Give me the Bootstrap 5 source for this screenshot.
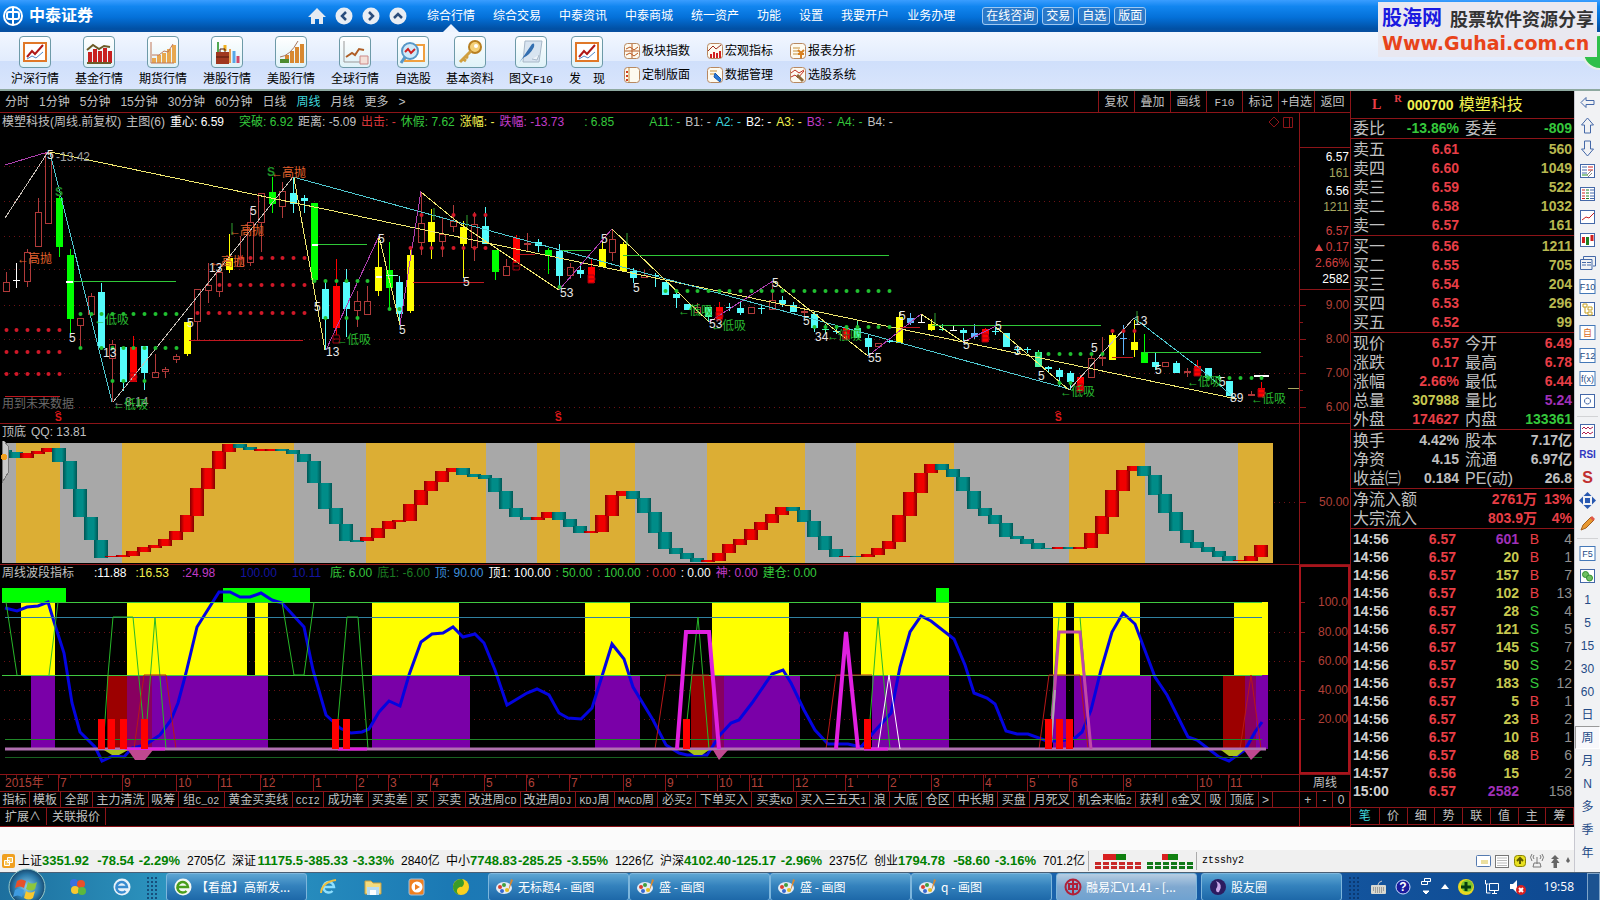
<!DOCTYPE html>
<html lang="zh-CN">
<head>
<meta charset="utf-8">
<meta name="viewport" content="width=device-width, initial-scale=1">
<title>中泰证券 - 模塑科技</title>
<link href="https://cdn.jsdelivr.net/npm/bootstrap@5.3.0/dist/css/bootstrap.min.css" rel="stylesheet">
<style>
body{font:12px/16px "Liberation Sans","Noto Sans CJK SC",sans-serif;background:#f0f0f0;color:#000;overflow-x:hidden}
button{font:inherit;color:inherit;background:none;border:0;padding:0;line-height:inherit}
a{color:inherit;text-decoration:none}
svg{display:block;flex:none}
.nowrap{white-space:nowrap}
.titlebar{height:32px;background:linear-gradient(#3a9dff 0,#1186f0 20%,#0470d8 55%,#0150a4 90%,#0a50a0);color:#fff;position:relative}
.brand{width:308px;font-size:16px;font-weight:700;gap:6px;padding-left:3px}
.brand span{line-height:20px}
.menus{gap:18px;margin-left:20px}
.menus a.on{position:relative}
.menus a.on::after{content:"";position:absolute;left:16px;top:16px;border:8px solid transparent;border-top:0;border-bottom-color:#eef4fe}
.pills{margin-left:27px}
.pill{border:1px solid #9fc9f2;border-radius:3px;background:#2c79c8;height:18px;line-height:16px;padding:0 3px}
.toolbar{height:59px;background:linear-gradient(#f2f7ff,#e2ecfd 50%,#cfdffb 51%,#d9e5fc);border-bottom:2px solid #8ea9a0;padding-left:3px}
.tool{width:64px;height:57px;display:flex;flex-direction:column;align-items:center;padding-top:4px;gap:3px}
.tool.w52{width:52px}.tool.w62{width:62px}.tool.w60{width:60px}
.tool svg{border:1px solid #6d9aa8;border-radius:4px;background:linear-gradient(#fff,#dff2f8)}
.minis{display:grid;grid-template-columns:repeat(3,83px);grid-auto-rows:24px;margin:7px 0 0 11px;align-items:center}
.minis button{display:flex;gap:2px;align-items:center}
.ball{position:absolute;right:-18px;top:34px;width:36px;height:36px;border-radius:50%;background:#2fbf4a;border:2px solid #e8efe8}
.mark-box{position:absolute;right:3px;top:2px;width:219px;height:55px;background:#e9e8f0;padding:4px 3px 0 4px;z-index:2}
.mark-box b{font-size:20px;line-height:24px;color:#1a1ae0}
.mark-box i{font:normal 700 18px/24px "Noto Sans CJK SC",sans-serif;color:#333}
.mark-box strong{display:block;font:700 19px/26px "DejaVu Sans",sans-serif;color:#e8431a}
.dark{background:#000;color:#c0c0c0}
.ln{border-color:#8c1418!important}
.periods{height:22px;border-bottom:1px solid #8c1418}
.periods .left{gap:10px;padding-left:5px}
.periods .fn{width:36px;height:21px;border-left:1px solid #8c1418;text-align:center}
.cy{color:#3fd6dc}.gn{color:#35c83c}.wh{color:#fff}.rd{color:#d8363a}.ye{color:#f0f050}.mg{color:#c03cc8}.dg{color:#1c7c22}.bl{color:#1414a0}.lb{color:#3e8fdc}
.panel{display:grid;grid-template-columns:minmax(0,1fr) 51px;border-bottom:1px solid #8c1418}
.plot{min-width:0;overflow:hidden}
.axis{border-left:1px solid #8c1418}
.axis.hot{border:2px solid #a8141c}
.hd{display:flex;gap:5px;white-space:nowrap;padding-left:2px;line-height:14px}
.hd .g1{margin-left:10px}.hd .g2{margin-left:15px}.hd .g3{margin-left:30px}
.hmain{height:16px;position:relative;padding-top:2px}.hsub{height:17px;padding-top:1px}
.corner{position:absolute;right:4px;top:2px}
svg.fill{width:100%}
svg text{font-family:"Liberation Sans","Noto Sans CJK SC",sans-serif;font-size:12px}
.cr{shape-rendering:crispEdges}
.tabs{display:grid;height:17px;border-bottom:1px solid #8c1418}
.tabs button{border-right:1px solid #8c1418;overflow:hidden;white-space:nowrap;line-height:15px;height:16px;text-align:center}
.tabs .lt{font:10px/12px "Liberation Mono",monospace}
.fn .lt,.tool .lt{font:11px/12px "Liberation Mono",monospace}
.tabs-ind{grid-template-columns:30fr 31fr 32fr 56fr 30fr 46fr 68fr 31fr 45fr 43fr 22fr 32fr 55fr 55fr 39fr 44fr 38fr 56fr 45fr 73fr 20fr 32fr 32fr 44fr 32fr 44fr 62fr 32fr 38fr 20fr 33fr 14fr 26fr}
.tabs-zoom{grid-template-columns:repeat(3,1fr);border-left:1px solid #8c1418}
.tabs2{height:18px;display:flex}
.tabs2 button{border-right:1px solid #8c1418;padding:0 5px;height:17px}
.split{display:grid;grid-template-columns:minmax(0,1fr) 51px}
.quote{width:224px;flex:none;border-left:1px solid #8c1418;font-size:14px;color:#c0c0c0}
.quote .ttl{height:28px;font-weight:700;border-bottom:1px solid #8c1418;gap:5px;padding-left:21px}
.quote table{width:100%;table-layout:fixed;border-bottom:1px solid #8c1418;border-collapse:separate;border-spacing:0;margin:0}
.quote td,.quote th{padding:0;height:19px;line-height:19px;text-align:right;font-weight:700;white-space:nowrap}
.quote th{font-weight:400;font-size:16px;text-align:left}
.pad{border-top:1px solid #000}
.quote td:last-child{padding-right:2px}
.quote th{padding-left:2px}
.quote th+td+th{padding-left:6px}
.quote .q5 td{color:#b8b850}.quote .q5 td:nth-child(2){color:#e83e46}
.quote .r{color:#e83e46}.quote .g{color:#35c83c}.quote .y{color:#c8c850}.quote .m{color:#a030b8}
.quote .ticks{border:0;margin:1px 0 7px}
.quote .ticks td,.quote .ticks th{height:18px;line-height:18px}
.quote .ticks th{font-size:14px;font-weight:700;color:#d0d0d0}
.quote .ticks td:nth-child(4){font-weight:400;padding-right:5px}
.quote .ticks td:last-child{font-weight:400;color:#909090}
.serif{font-family:"Liberation Serif",serif}
.qtabs{display:grid;grid-template-columns:repeat(8,1fr);height:18px;border:1px solid #8c1418;border-left:0;font-size:12px}
.qtabs button+button{border-left:1px solid #8c1418}
.rail{width:26px;flex:none;background:#f1f2f4;border-left:1px solid #c8c8d0;color:#244a86}
.rail button{height:23px;width:25px;display:flex;align-items:center;justify-content:center}
.rail hr{margin:3px 2px;border-color:#777;height:1px}
.rail button.on{background:#f8f8fb;border:1px solid #999;border-right-color:#fff;border-bottom-color:#fff}
.blank{background:#fbfbfb;flex:1 0 23px}
.status{height:22px;background:#f0f0f0;padding-left:2px}
.idx{display:grid;grid-template-columns:24px 47px 45px 46px 52px}
.idx b{color:#008000;font-size:13px;text-align:right}
.idx span:last-child{padding-left:7px}
.user{border-left:1px solid #aaa;padding-left:5px;font-family:"Liberation Mono",monospace;font-size:10px;line-height:18px;flex:1}
.meter{border-left:1px solid #aaa;padding-left:6px;width:108px}
.taskbar{height:29px;background:linear-gradient(90deg,#1d6f9e,#2f9ac4 12%,#1b79b4 28%,#2777bd 45%,#175fa9 70%,#0e4890);border-top:1px solid #4a5f74;color:#fff;font-family:"Noto Sans CJK SC",sans-serif;position:relative}
.orb{width:56px;height:28px;overflow:visible}
.quick{width:44px;display:flex;justify-content:center}
.quicks{width:181px}
.task{flex:0 1 141px;min-width:0;height:28px;border:1px solid #7db6dc;border-radius:3px;background:linear-gradient(#5ea6d3,#3482bd 45%,#1d68a8);display:flex;align-items:center;gap:4px;padding-left:7px;white-space:nowrap;overflow:hidden}
.task.on{background:linear-gradient(#b6cde2,#7fa8d0 50%,#6fa2d0)}
.tray{gap:9px}
.clock{font-family:"Open Sans",sans-serif}
.peek{width:13px;height:28px;border:1px solid #7fa4c8;background:#1c5391}
</style>
</head>
<body class="min-vh-100 d-flex flex-column">

<header class="titlebar d-flex align-items-center nowrap">
  <div class="brand d-flex align-items-center">
    <svg width="20" height="20" viewBox="0 0 20 20" fill="none" stroke="#fff" stroke-width="2"><circle cx="10" cy="10" r="9"/><path d="M10 1v18M9 6H6a2 2 0 0 0-2 2v3a2 2 0 0 0 2 2h3M11 6h3a2 2 0 0 1 2 2v3a2 2 0 0 1-2 2h-3"/></svg>
    <span>中泰证券</span>
  </div>
  <nav class="d-flex align-items-center" aria-label="导航">
    <div class="d-flex" style="gap:9px" id="navicons"></div>
    <div class="menus d-flex"><a href="#" class="on">综合行情</a><a href="#">综合交易</a><a href="#">中泰资讯</a><a href="#">中泰商城</a><a href="#">统一资产</a><a href="#">功能</a><a href="#">设置</a><a href="#">我要开户</a><a href="#">业务办理</a></div>
    <div class="pills d-flex gap-1"><button class="pill">在线咨询</button><button class="pill">交易</button><button class="pill">自选</button><button class="pill">版面</button></div>
  </nav>
  <div class="ball"></div>
  <div class="mark-box"><div class="d-flex gap-2"><b>股海网</b><i>股票软件资源分享</i></div><strong>Www.Guhai.com.cn</strong></div>
</header>

<div class="toolbar d-flex nowrap">
  <div class="d-flex" id="tools"></div>
  <div class="minis" id="minis"></div>
</div>

<div class="d-flex flex-grow-1">
 <div class="flex-grow-1 d-flex flex-column" style="min-width:0">
  <div class="d-flex dark">
   <main class="flex-grow-1" style="min-width:0">
    <div class="periods d-flex justify-content-between nowrap">
      <div class="left d-flex align-items-center"><button>分时</button><button>1分钟</button><button>5分钟</button><button>15分钟</button><button>30分钟</button><button>60分钟</button><button>日线</button><button class="cy">周线</button><button>月线</button><button>更多</button><button>&gt;</button></div>
      <div class="d-flex"><button class="fn">复权</button><button class="fn">叠加</button><button class="fn">画线</button><button class="fn"><span class="lt">F10</span></button><button class="fn">标记</button><button class="fn">+自选</button><button class="fn">返回</button></div>
    </div>

    <section class="panel">
      <div class="plot">
        <div class="hd hmain"><span>模塑科技(周线.前复权)</span><span>主图(6)</span><span class="wh">重心: 6.59</span><span class="gn g1">突破: 6.92</span><span>距离: -5.09</span><span class="rd">出击: -</span><span class="gn">休假: 7.62</span><span class="ye">涨幅: -</span><span class="mg">跌幅: -13.73</span><span class="gn g2">: 6.85</span><span class="gn g3">A11: -</span><span>B1: -</span><span class="cy">A2: -</span><span class="wh">B2: -</span><span class="ye">A3: -</span><span class="mg">B3: -</span><span class="gn">A4: -</span><span>B4: -</span>
          <svg class="corner" width="28" height="14" fill="none" stroke="#8c1418"><path d="M7 2l5 5-5 5-5-5zM16.500 2.500h9v10h-9zM22.500 2.500v10"/></svg></div>
        <svg class="fill" id="kline" height="294" role="img" aria-label="周K线"></svg>
      </div>
      <div class="axis"><svg id="kaxis" width="50" height="310"></svg></div>
    </section>

    <section class="panel">
      <div class="plot">
        <div class="hd hsub"><span>顶底</span><span>QQ: 13.81</span></div>
        <svg class="fill" id="sub1" height="123" role="img" aria-label="顶底"></svg>
      </div>
      <div class="axis"><svg id="axis1" width="50" height="140"></svg></div>
    </section>

    <section class="panel">
      <div class="plot">
        <div class="hd hsub"><span>周线波段指标</span><span class="wh g2">:11.88</span><span class="ye ms-1">:16.53</span><span class="mg ms-2">:24.98</span><span class="bl ms-3 ps-1">100.00</span><span class="bl g1">10.11</span><span class="gn ms-1">底: 6.00</span><span class="dg">底1: -6.00</span><span class="lb">顶: 90.00</span><span class="wh">顶1: 100.00</span><span class="gn">: 50.00</span><span class="gn">: 100.00</span><span class="rd">: 0.00</span><span class="wh">: 0.00</span><span class="mg">神: 0.00</span><span class="gn">建仓: 0.00</span></div>
        <svg class="fill" id="sub2" height="192" role="img" aria-label="周线波段指标"></svg>
      </div>
      <div class="axis hot"><svg id="axis2" width="47" height="205"></svg></div>
    </section>

    <div class="split">
      <div class="plot"><svg class="fill" id="dates" height="16"></svg></div>
      <div class="axis text-center">周线</div>
    </div>
    <div class="split">
      <div class="tabs tabs-ind ln" id="indtabs" style="border-top:1px solid"></div>
      <div class="tabs tabs-zoom ln" style="border-top:1px solid"><button>+</button><button>-</button><button>0</button></div>
    </div>
    <div class="split border-bottom ln">
      <div class="tabs2"><button>扩展∧</button><button>关联报价</button></div><div class="axis"></div>
    </div>
   </main>

   <aside class="quote">
    <div class="ttl d-flex align-items-center"><span class="r serif">L</span><sup class="r serif ms-2">R</sup><span class="ye">000700</span><span class="ye fs-6 fw-normal">模塑科技</span></div>
    <div id="quote"></div>
    <div class="qtabs"><button class="cy">笔</button><button>价</button><button>细</button><button>势</button><button>联</button><button>值</button><button>主</button><button>筹</button></div>
   </aside>
  </div>
  <div class="blank"></div>
  <footer class="status d-flex align-items-center nowrap">
    <svg width="16" height="14"><rect x="0" y="0" width="13" height="14" rx="2" fill="#f0a020"/><path d="M5.500 3.500h5v5h-5zM2.500 6.500h5v5h-5z" fill="#f8c860" stroke="#fff"/></svg>
    <div class="d-flex" id="idx"></div>
    <div class="meter"><svg width="100" height="20" id="meter" class="cr"></svg></div>
    <span class="user">ztsshy2</span>
    <svg width="98" height="20" fill="none">
      <rect x=".5" y="4.500" width="14" height="11" rx="1" fill="#fff" stroke="#557ab0"/><path d="M5 10h7M5 12h7" stroke="#d8c040"/>
      <rect x="19.500" y="4.500" width="13" height="12" fill="#fff" stroke="#777"/><path d="M21 7h10M21 9.500h10M21 12h10M21 14.500h10" stroke="#bbb"/>
      <rect x="38.500" y="4.500" width="11" height="11" rx="3" fill="#e8e020" stroke="#8a8400"/><path d="M44 13V7m-3 3l3-3 3 3" stroke="#5c5800" stroke-width="2"/>
      <path d="M61 6v7M57 16l1-4h6l1 4zM58 4q-2 2 0 4M64 4q2 2 0 4M56 3q-3 3 0 7M66 3q3 3 0 7" stroke="#777"/>
      <path d="M79 4l4 4h-2.500l3 4h-2.500v5h-3.500v-5h-2.500l3-4H75zM92 6l2 4-2 2-2-2zM92 12v3" fill="#666"/>
    </svg>
  </footer>
 </div>
 <nav class="rail" id="rail" aria-label="工具"></nav>
</div>

<div class="taskbar d-flex align-items-center">
  <button class="orb" aria-label="开始"><svg width="56" height="30" viewBox="0 0 56 30" overflow="visible"><defs><radialGradient id="orb"><stop offset="0" stop-color="#8fd0f0"/><stop offset=".7" stop-color="#2a78a8"/><stop offset="1" stop-color="#184a70"/></radialGradient></defs><circle cx="27" cy="14" r="18" fill="url(#orb)" stroke="#9cc"/><path d="M17 8q4-3 9 0l-2 7q-4-3-9 0z" fill="#e8502a"/><path d="M28 9q4 3 9 0l-2 7q-4 3-9 0z" fill="#8cc63e"/><path d="M15 17q4-3 9 0l-2 7q-4-3-9 0z" fill="#3f9be0"/><path d="M26 18q4 3 9 0l-2 7q-4 3-9 0z" fill="#f8c830"/></svg></button>
  <div class="quick"><svg width="18" height="18"><circle cx="5" cy="5" r="4" fill="#3a70e0"/><circle cx="12" cy="6" r="4" fill="#e8502a"/><circle cx="6" cy="12" r="4" fill="#f8c830"/><circle cx="13" cy="13" r="4" fill="#5cb83e"/></svg></div>
  <div class="quick"><svg width="18" height="18"><circle cx="9" cy="9" r="8.500" fill="#e8f2fa"/><use href="#ie" color="#3a8cd0"/></svg></div>
  <svg width="22" height="24"><path d="M4 2v22M8 2v22M12 2v22" stroke="#164e7c" stroke-width="2" stroke-dasharray="2 2"/></svg>
  <button class="task"><svg width="18" height="18"><circle cx="9" cy="9" r="8.500" fill="#f4f8f4"/><use href="#ie" color="#4a9e1c"/></svg>【看盘】高新发...</button>
  <div class="quicks d-flex"><div class="quick"><svg width="18" height="18"><use href="#ie" color="#8fe0ff"/><path d="M1 15Q2 4 16 2" stroke="#f0c040" fill="none" stroke-width="2"/></svg></div>
  <div class="quick"><svg width="18" height="18"><path d="M1 3h6l2 2h8v11H1z" fill="#f4dc80" stroke="#c8a040"/><path d="M3 9h12v8H3z" fill="#b8dcf4"/><path d="M6 12h6v5H6z" fill="#fff"/></svg></div>
  <div class="quick"><svg width="18" height="18"><rect x="1" y="1" width="15" height="16" rx="2" fill="#f08020" stroke="#9cc0e0"/><circle cx="9" cy="9" r="5.500" fill="#fff"/><path d="M7 6l5 3-5 3z" fill="#f08020"/></svg></div>
  <div class="quick"><svg width="18" height="18"><circle cx="9" cy="9" r="8" fill="#f8d020"/><path d="M10 1a5 5 0 0 1 0 8 4 4 0 0 0-2 8A8 8 0 0 1 10 1z" fill="#3c9c28"/></svg></div></div>
  <button class="task"><svg width="18" height="18"><use href="#paint"/></svg>无标题4 - 画图</button>
  <button class="task"><svg width="18" height="18"><use href="#paint"/></svg>盛 - 画图</button>
  <button class="task"><svg width="18" height="18"><use href="#paint"/></svg>盛 - 画图</button>
  <button class="task"><svg width="18" height="18"><use href="#paint"/></svg>q - 画图</button>
  <button class="task on ms-1"><svg width="18" height="18" fill="none" stroke="#b02038" stroke-width="2"><circle cx="9" cy="9" r="7.500"/><path d="M9 2v14M5 6h8v5H5z"/></svg>融易汇V1.41 - [...</button>
  <button class="task ms-1"><svg width="18" height="18"><circle cx="9" cy="9" r="8" fill="#2c1c60"/><path d="M7 3q8 3 3 11-3 1-3-3 3-4 0-8z" fill="#c8a8e8"/></svg>股友圈</button>
  <div class="tray d-flex align-items-center ms-auto">
    <svg width="16" height="24"><path d="M4 2v22M8 2v22M12 2v22" stroke="#0b3a74" stroke-width="2" stroke-dasharray="2 2"/></svg>
    <svg width="15" height="14"><rect y="5" width="15" height="9" rx="1" fill="#d8d8d0"/><path d="M2 8h11M2 10h11M4 12h7" stroke="#666" stroke-dasharray="1 1"/><path d="M7 5q0-3 4-4" stroke="#ccc" fill="none"/></svg>
    <svg width="16" height="16"><circle cx="8" cy="8" r="7" fill="#1a1a9c" stroke="#cdf"/><text x="8" y="12" text-anchor="middle" fill="#fff" font-weight="700">?</text></svg>
    <svg width="12" height="20" fill="none" stroke="#fff"><path d="M4.500 1.500h6v3h-6zM1.500 4.500h6v3h-6z"/><path d="M3 14h6l-3 3z" fill="#fff"/></svg>
    <svg width="8" height="8"><path d="M0 6h8L4 1z" fill="#fff"/></svg>
    <svg width="17" height="17"><circle cx="8" cy="8" r="8" fill="#e8d820"/><circle cx="9" cy="7" r="6" fill="#7cc42c"/><path d="M8 3v9M3 8h10" stroke="#063c10" stroke-width="3"/></svg>
    <svg width="16" height="16" fill="none" stroke="#fff"><path d="M5.500 4.500h9v7h-9zM8 14.500h5M10.500 12v2M1.500 1v4h3M2.500 5v9h4"/></svg>
    <svg width="17" height="16"><path d="M1 5h3l4-4v13l-4-4H1z" fill="#fff"/><circle cx="12" cy="11" r="5" fill="#d82020"/><path d="M10 9l4 4M14 9l-4 4" stroke="#fff" stroke-width="2"/></svg>
    <span class="clock ms-2 me-1">19:58</span><button class="peek" aria-label="显示桌面"></button>
  </div>
</div>

<svg width="0" height="0" class="position-absolute"><defs>
  <linearGradient id="gr"><stop offset="0" stop-color="#800000"/><stop offset=".3" stop-color="#f00000"/><stop offset=".7" stop-color="#f00000"/><stop offset="1" stop-color="#800000"/></linearGradient>
  <linearGradient id="gt"><stop offset="0" stop-color="#005654"/><stop offset=".3" stop-color="#008c88"/><stop offset=".7" stop-color="#008c88"/><stop offset="1" stop-color="#005654"/></linearGradient>
  <g id="ie" fill="none" stroke="currentColor" stroke-width="2.500"><path d="M4 9h10a5.300 5.300 0 1 0-1.500 4"/></g>
  <g id="paint"><ellipse cx="8" cy="10" rx="8" ry="6" fill="#e4ecf4"/><circle cx="4" cy="9" r="2" fill="#d84030"/><circle cx="8" cy="7" r="2" fill="#40a040"/><circle cx="6" cy="13" r="2" fill="#3868d0"/><circle cx="11" cy="12" r="2" fill="#e8c020"/><path d="M12 14L15 1l2 1z" fill="#d88830"/></g>
</defs></svg>

<script src="https://cdn.jsdelivr.net/npm/bootstrap@5.3.0/dist/js/bootstrap.bundle.min.js"></script>
<script>
const $ = id => document.getElementById(id);
const PITCH = 10.64, X0 = 5.7, cx = i => Math.round(X0 + PITCH * i);
const seg = (x1, y1, x2, y2, c, w = 1) => `<path d="M${x1} ${y1}L${x2} ${y2}" stroke="${c}" stroke-width="${w}" fill="none"/>`;
const box = (x, y, w, h, c) => `<rect x="${x}" y="${y}" width="${w}" height="${h}" fill="${c}"/>`;
const txt = (x, y, s, c, e = '') => `<text x="${x}" y="${y + 4}" fill="${c}" ${e}>${s}</text>`;
const poly = (p, c, w = 1) => `<polyline points="${p}" fill="none" stroke="${c}" stroke-width="${w}"/>`;
const grid = (y, to = 1299) => `<path d="M4 ${y}.5H${to}" stroke="#6c1216" stroke-dasharray="1 4"/>`;

/* title bar icons */
$('navicons').innerHTML = ['<path d="M9 1L0 10h3v7h4v-5h4v5h4v-7h3z" fill="#e4eaf2"/>']
  .concat(['M11 5L7 9l4 4', 'M7 5l4 4-4 4', 'M5 11l4-4 4 4'].map(d => `<circle cx="9" cy="9" r="8.500" fill="#e8edf4"/><path d="${d}" fill="none" stroke="#2a4c7c" stroke-width="2.500"/>`))
  .map(s => `<button><svg width="18" height="18">${s}</svg></button>`).join('');

/* large tools */
const bars = (c, hs) => hs.map((h, k) => `<rect x="${4 + k * 5}" y="${26 - h}" width="4" height="${h}" fill="${c}"/>`).join('');
const I = {
  frame: '<rect x="4" y="6" width="22" height="18" fill="#fff" stroke="#e07828" stroke-width="2"/><path d="M7 20l5-6 3 3 8-9" fill="none" stroke="#b01818" stroke-width="2"/><path d="M7 22l5-3 4 2 7-6" fill="none" stroke="#5088c8"/>',
  fund: bars('#c82020', [11, 14, 12, 15, 12]) + '<path d="M3 26h24M3 13l6-5 6 4 5-3 6 1" stroke="#6c5c28" fill="none" stroke-width="2"/>',
  fut: bars('#e8a850', [5, 8, 10, 14, 18]) + '<path d="M3 5v21h23M4 18h7l5-4 4 1 5-8" stroke="#c07858" fill="none"/>',
  hk: '<path d="M6 5v10" stroke="#50a850" stroke-width="2"/><path d="M13 8v6" stroke="#f0b020" stroke-width="3"/><path d="M18 12v14" stroke="#e8a050" stroke-width="2"/><path d="M22 14v12" stroke="#58a8e8" stroke-width="3"/><path d="M26 19v7" stroke="#d04868" stroke-width="3"/><path d="M4 15h13v12H4z" fill="#a03820"/><path d="M8 15v-3h5v3M4 20h13" stroke="#50180c" fill="none"/>',
  us: bars('#d88830', [4, 8, 12, 16, 19]) + '<path d="M4 22h9v4H4z" fill="#4c8c30"/><path d="M4 20q10-1 18-16" stroke="#a87860" fill="none"/>',
  glob: '<path d="M4 4v21h22" stroke="#999" fill="none"/><path d="M6 20l6-4 3 2 4-6 5 1" stroke="#b06028" fill="none" stroke-width="2"/><path d="M20 19h8v8h-8z" fill="#f4e0d8" stroke="#c88"/>',
  own: '<path d="M7 8h19v16H7z" fill="#fff" stroke="#f0a040" stroke-width="2"/><circle cx="12" cy="14" r="8" fill="#cfeafa" stroke="#5898c8" stroke-width="2"/><path d="M7 15l3-3 3 4 4-4" stroke="#d02020" fill="none" stroke-width="2"/><path d="M7 20l-4 6" stroke="#5898c8" stroke-width="3"/>',
  key: '<circle cx="20" cy="10" r="6" fill="#f4d078" stroke="#b88020" stroke-width="2"/><circle cx="21" cy="9" r="2" fill="#fff"/><path d="M16 14L5 25m3-3l3 2m-1-5l3 2" stroke="#d0a040" stroke-width="3" fill="none"/>',
  pen: '<path d="M9 4h17l-3 21H7z" fill="#d8e4f0" stroke="#a8b8c8"/><path d="M3 26L16 7q3-2 2 3-4 8-11 11z" fill="#3470b0"/><path d="M16 22l5 1 2-5" fill="#eef4fa" stroke="#a8b8c8"/>'
};
$('tools').innerHTML = [['沪深行情','frame',''],['基金行情','fund',''],['期货行情','fut',''],['港股行情','hk',''],['美股行情','us',''],['全球行情','glob',''],['自选股','own','w52'],['基本资料','key','w62'],['图文<span class="lt">F10</span>','pen','w60'],['发&emsp;现','frame','w52']]
  .map(([n, k, w]) => `<button class="tool ${w}"><svg width="32" height="32" viewBox="0 0 30 30">${I[k]}</svg><span>${n}</span></button>`).join('');
const M = ['<path d="M8 1v14M1 8h14M2 6l4-2 4 3 4-3M2 12l4-2 4 3 4-3" stroke="#b85820"/>','<path d="M4 15v-4M7 15V9M10 15v-5M13 15V8" stroke="#d02020" stroke-width="2"/><path d="M1 8l5-5 3 3 5-4" stroke="#a03020"/>','<path d="M3 5h7M3 8h5M3 11h5" stroke="#c89038"/><path d="M8 7l3 3 3-3M11 10v5M8 11h6" stroke="#d88020" stroke-width="2"/>',
 '<path d="M5 1v14" stroke="#c89038"/><path d="M3 4v2M3 8v2M3 12v2" stroke="#d04020" stroke-width="2"/>','<path d="M3 4h7M3 7h4" stroke="#c89038"/><path d="M8 6l6 6-1 3-6-5z" fill="#2a78d8" stroke="#1858a8"/>','<path d="M1 6l4-3 4 3 5-3M1 10l4-2 3 3 6-7" stroke="#c03020"/><path d="M7 8l6 6" stroke="#8c6838" stroke-width="3"/>'];
$('minis').innerHTML = ['板块指数','宏观指标','报表分析','定制版面','数据管理','选股系统'].map((n, k) => `<button><svg width="16" height="16" fill="none"><rect x=".5" y=".5" width="15" height="15" rx="3" fill="#fdfaf0" stroke="#b88860"/>${M[k]}</svg>${n}</button>`).join('');

/* weekly candles: index, kind, high, top, bottom, low */
const K = `0 h 272 282 292 292|1 w 263 280 281 288|2 h 249 252 282 287|3 h 198 212 247 247|4 h 152 152 224 224|5 g 195 198 247 257|6 g 249 255 319 335|7 h 318 318 326 348|8 h 293 296 315 315|9 c 283 292 348 348|10 h 340 344 359 402|11 c 347 347 382 391|12 r 336 347 382 382|13 c 346 346 373 390|14 h 354 372 378 378|15 h 367 369 372 378|16 h 354 356 360 363|17 y 322 322 354 356|18 h 289 289 322 340|19 h 263 285 291 303|20 h 267 272 292 297|21 y 234 258 270 273|22 h 236 258 267 267|23 h 208 222 263 266|24 h 193 193 223 252|25 g 177 192 204 213|26 h 182 191 207 218|27 c 178 193 204 213|28 c 195 198 201 213|29 g 203 203 280 280|30 c 282 289 319 350|31 r 259 286 328 335|32 c 269 282 309 337|33 h 291 301 311 327|34 h 286 301 315 315|35 y 237 267 291 296|36 g 242 270 288 309|37 c 276 282 314 323|38 y 247 255 311 313|39 h 192 223 243 255|40 y 209 222 242 259|41 h 217 234 242 257|42 h 205 221 227 232|43 y 221 227 244 278|44 h 212 224 248 261|45 c 207 226 244 244|46 g 250 250 272 280|47 h 259 266 276 276|48 r 235 238 263 263|49 h 233 243 245 251|50 c 239 242 246 252|51 g 248 250 256 274|52 c 244 251 276 288|53 h 263 267 276 279|54 c 263 270 274 278|55 r 258 267 283 283|56 y 242 249 267 267|57 h 229 239 253 261|58 y 242 244 271 271|59 c 268 271 278 283|60 h 270 275 278 278|61 c 273 275 276 287|62 c 282 282 295 295|63 c 292 294 298 308|64 c 304 304 310 310|65 h 303 307 313 313|66 t 307 307 317 322|67 r 302 307 319 319|68 c 303 307 308 311|69 c 302 308 313 315|70 h 307 307 314 314|71 c 305 308 309 314|72 h 283 300 310 310|73 c 296 300 304 307|74 c 302 305 312 312|75 h 309 311 313 317|76 c 312 314 328 332|77 t 324 329 330 333|78 c 327 331 332 334|79 r 328 328 339 339|80 t 321 328 338 338|81 c 335 338 347 356|82 h 343 343 347 347|83 c 339 341 342 343|84 y 312 317 343 343|85 b 313 318 323 325|86 w 314 322 323 323|87 y 319 324 330 331|88 t 324 329 330 331|89 w 326 330 331 331|90 c 328 330 333 342|91 b 324 333 337 339|92 r 328 329 342 342|93 c 327 331 332 335|94 c 333 333 347 347|95 c 347 349 350 353|96 c 347 349 350 353|97 t 350 352 367 367|98 c 366 367 369 372|99 c 368 370 377 387|100 c 371 373 382 390|101 r 375 377 391 391|102 h 353 358 378 378|103 h 337 357 359 366|104 y 333 335 360 360|105 b 325 338 339 355|106 y 320 342 350 357|107 g 334 352 363 363|108 c 353 362 367 370|109 h 362 362 367 367|110 c 361 363 373 373|111 h 368 371 373 377|112 r 360 366 376 376|113 c 368 368 378 378|114 t 375 377 378 381|115 c 381 381 396 396|117 h 391 394 395 395|118 r 382 388 397 397`.split('|').map(r => r.split(' '));
const KC = {h:'#b03a3a', c:'#54fcfc', g:'#00ff00', y:'#ffff00', r:'#ff0000', w:'#fff', t:'#48f8a8', b:'#60b8ff'};
let s = [166,201,236,269,305,339,373,407].map(y => grid(y, 1296)).join('');
for (const [i, k, hi, t, b, lo] of K) {
  const x = cx(+i), c = KC[k], h = b - t;
  s += seg(x + .5, +hi, x + .5, k === 'h' ? +t : +lo, c);
  if (k === 'h') { s += seg(x + .5, +b, x + .5, +lo, c) + `<rect x="${x - 2.5}" y="${+t + .5}" width="6" height="${Math.max(1, h - 1)}" fill="none" stroke="${c}"/>`; }
  else s += box(x - 3, t, 7, Math.max(1, h), c);
}
const YL = '#f0e870', MG = '#b040b0', WH = '#c8c0b8', CYL = '#50c8d0', GL = '#30c838', RL = '#c01820';
s += [[5,165,48,152,MG],[5,218,48,152,WH],[50,153,112,402,CYL],[113,402,293,177,WH],[50,152,1237,399,YL],[293,177,1069,389,CYL],[294,178,325,350,YL],[326,350,379,236,MG],[379,236,400,325,YL],[400,325,421,191,MG],[421,192,460,224,YL],[460,224,559,290,YL],[559,290,612,229,MG],[612,229,709,322,YL],[709,322,773,281,MG],[773,281,868,356,YL],[868,356,921,314,MG],[921,314,963,342,YL],[963,342,996,326,MG],[996,327,1069,390,YL],[1069,390,1134,318,WH],[1134,318,1198,367,CYL],[1198,367,1236,399,CYL],
 [69,281.5,176,281.5,GL],[5,396.5,60,396.5,RL],[189,340.5,303,340.5,RL],[314,244.5,367,244.5,GL],[413,282.5,484,282.5,RL],[562,250.5,591,250.5,GL],[623,255.5,889,255.5,GL],[516,254.5,535,254.5,RL],[932,325.5,1101,325.5,GL],[1144,352.5,1261,352.5,GL],[900,327.5,920,327.5,RL],[1112,357.5,1133,357.5,RL],[1254,376,1269,376,'#fff',2],[1288,388.5,1299,388.5,'#a8a860'],[66,282,73,282,'#fff',2],[376,277,382,277,'#fff',2],[386,275,398,275,'#9fc'],[312,245,318,245,'#fff',2]].map(a => seg(...a)).join('');
s = `<g class="cr">${s}</g>`;
/* signal dots: colour, y, first, last */
[['r',330,0,5],['r',352,0,5],['r',374,0,5],['r',258,22,28],['r',285,20,28],['r',313,18,28],['g',314,7,16],['g',348,7,7],['g',348,9,16],['g',381,10,11],['g',381,13,13],['g',281,29,34],['g',318,30,30],['g',318,32,33],['r',248,38,45],['r',215,39,39],['r',215,42,42],['r',215,44,45],['g',309,36,37],['g',287,52,52],['g',291,62,83],['g',327,76,83],['g',354,97,103],['g',383,99,100],['r',331,104,106],['g',378,113,118]]
 .forEach(([c, y, a, b]) => { for (let i = a; i <= b; i++) s += `<circle cx="${cx(i) + .5}" cy="${y}" r="2" fill="${c === 'r' ? '#d01828' : '#20c030'}"/>`; });
const W = '#e8e8e8', OR = '#e0622c', GT = '#28b830';
s += [[47,155,'5'],[69,338,'5'],[103,353,'13'],[250,211,'5'],[209,268,'13'],[187,323,'5'],[314,307,'5'],[326,352,'13'],[378,239,'5'],[399,330,'5'],[463,282,'5'],[560,293,'53'],[601,239,'5'],[633,288,'5'],[709,324,'53'],[772,283,'5'],[803,321,'5'],[815,337,'34'],[868,358,'55'],[899,316,'5'],[963,345,'5'],[995,326,'5'],[1014,351,'3'],[1038,376,'5'],[1091,348,'5'],[1134,321,'13'],[1155,370,'5'],[1219,382,'5'],[1230,398,'89']].map(([x, y, t]) => txt(x, y, t, W)).join('');
s += txt(56,157,'-13.42','#a0a0a0') + txt(113,402,'←8.14','#a0a0a0') + txt(2,404,'用到未来数据','#686868');
s += [[17,259],[229,231],[210,262],[271,173]].map(([x, y]) => txt(x, y, '←', OR) + txt(x + 11, y, '高抛', OR)).join('');
s += [[94,320],[113,405],[336,340],[678,311],[711,326],[827,336],[1060,392],[1187,382],[1251,399]].map(([x, y]) => txt(x, y, '←', GT) + txt(x + 11, y, '低吸', GT)).join('');
s += [[55,192],[267,172]].map(([x, y]) => txt(x, y, 'S', '#209028', 'font-weight="700"')).join('');
s += [58, 558, 1058].map(x => `<path d="M${x - 3} 413l3-2 3 2" stroke="#e01818" fill="none"/>` + txt(x - 3, 417, 'S', '#e01818', 'font-weight="700" style="font-size:10px"')).join('');
s += [[12,377],[31,339],[48,266],[55,279],[67,316],[79,335],[92,338],[101,388],[112,372],[118,393]].map(([i, y]) => `<path d="M${cx(i) - 3} ${y - 4}h6l1 4-1 4h-6zm0 4h6" fill="none" stroke="#a00010"/>`).join('');
s += [[232,230],[434,215],[467,222],[627,240],[935,320],[1137,318]].map(([x, y]) => seg(x, y - 7, x, y + 5, '#30a030')).join('');
$('kline').innerHTML = `<g transform="translate(0,-129)">${s}</g>`;

const ax = (y, t, c = '#b04038') => txt(49, y, t, c, 'text-anchor="end"');
$('kaxis').innerHTML = `<g transform="translate(0,-113)">${[147,289].map(y => seg(0, y + .5, 50, y + .5, '#8c1418')).join('')}${[305,339,373,407].map(y => seg(0, y + .5, 6, y + .5, '#8c1418')).join('')}${[322,356,390].map(y => seg(0, y + .5, 3, y + .5, '#8c1418')).join('')}${ax(157,'6.57','#fff')}${ax(173,'161','#a8a860')}${ax(191,'6.56','#fff')}${ax(207,'1211','#a8a860')}${ax(231,'6.57','#d04040')}${ax(247,'0.17','#d04040')}${ax(263,'2.66%','#d04040')}${ax(279,'2582','#fff')}${ax(305,'9.00')}${ax(339,'8.00')}${ax(373,'7.00')}${ax(407,'6.00')}<path d="M15 251h8l-4-7z" fill="#e04040"/></g>`;

/* oscillator: top and bottom of each bar, r rising / t falling */
const B = '450 452 t|452 458 t|453 458 r|451 454 r|448 452 r|448 462 t|461 489 t|489 517 t|517 540 t|540 558 t|556 557 r|555 557 r|551 556 r|547 552 r|545 548 r|539 546 r|531 540 r|515 532 r|488 516 r|468 489 r|451 469 r|444 452 r|444 448 t|447 450 t|449 451 r|449 451 r|449 451 t|450 454 t|454 462 t|461 483 t|483 509 t|508 524 t|524 541 t|540 542 t|537 541 r|528 538 r|521 529 r|520 522 r|504 521 r|490 505 r|481 491 r|471 482 r|468 472 r|468 475 t|474 477 t|475 479 t|478 492 t|491 509 t|508 517 t|517 520 t|517 520 r|512 518 r|512 520 t|519 527 t|526 533 t|531 533 r|515 532 r|495 516 r|491 496 r|491 499 t|498 513 t|512 533 t|532 549 t|548 554 t|553 559 t|558 562 t|560 562 r|553 561 r|544 553 r|539 545 r|529 540 r|522 530 r|514 523 r|507 515 r|507 511 t|510 522 t|521 537 t|536 550 t|549 557 t|556 557 r|556 557 t|554 557 r|548 555 r|541 549 r|515 542 r|492 516 r|473 493 r|464 473 r|464 470 t|469 477 t|477 491 t|491 509 t|508 516 t|515 524 t|523 537 t|536 539 t|539 544 t|543 549 t|548 549 t|547 549 r|547 549 t|547 549 r|533 548 r|516 534 r|490 517 r|470 491 r|466 471 r|466 476 t|475 495 t|494 513 t|512 531 t|530 543 t|542 548 t|547 552 t|551 557 t|556 561 t|560 561 r|556 561 r|545 557 r'.split('|').map(r => r.split(' '));
s = box(2, 443, 1271, 120, '#a8a8a8') + [[16,60],[122,294],[366,486],[537,560],[590,635],[707,805],[856,954],[1069,1145],[1238,1273]].map(([a, b]) => box(a, 443, b - a, 120, '#dcae34')).join('');
B.forEach(([t, b, c], i) => { const x = i ? cx(i) - 7 : 2; s += box(x, t, i ? 14 : 10, b - t, `url(#g${c})`); });
s += '<path d="M2 438l6 8v27l-6 10z" fill="#c8c8c8" stroke="#777"/><circle cx="4" cy="457" r="3" fill="#f0a020"/>' + grid(502).replace('M4', 'M1274');
$('sub1').innerHTML = `<g class="cr" transform="translate(0,-441)">${s}</g>`;
$('axis1').innerHTML = `<g transform="translate(0,-424)">${seg(0,502.5,6,502.5,'#8c1418')}${ax(502,'50.00')}</g>`;

/* swing indicator */
s = [632,661,690,719].map(y => grid(y)).join('');
const cols = (list, y, h, c) => { s += list.map(([a, b]) => box(a, y, b - a, h, c)).join(''); };
cols([[2,66],[223,310],[936,949]], 588, 14, '#00ff00');
cols([[21,55],[127,247],[255,268],[372,459],[585,630],[712,789],[861,949],[1053,1066],[1074,1140],[1234,1268]], 602, 73, '#ffff00');
cols([[31,55],[152,268],[372,470],[595,640],[724,800],[872,949],[1053,1066],[1074,1151],[1256,1268]], 675, 74, '#7a00a8');
cols([[107,127],[691,712],[1223,1245]], 675, 74, '#9c0000');
cols([[127,152],[712,724],[1245,1256]], 675, 74, '#880060');
s = `<g class="cr">${s}</g>`;
s += poly('5,608 17,611 27,607 38,606 48,602 55,625 64,653 72,703 80,732 95,747 102,761 113,756 124,757 132,748 145,745 160,735 171,720 178,703 186,673 197,627 219,592 230,592 240,597 250,597 261,593 272,600 282,603 304,627 313,670 326,715 340,728 351,733 362,732 369,729 379,712 389,701 400,706 409,675 421,642 432,634 443,633 453,627 463,637 475,634 484,643 495,670 507,705 527,693 537,689 549,695 559,713 568,718 581,719 592,708 603,673 612,644 624,659 633,687 653,720 666,745 679,753 687,755 707,755 720,735 731,723 739,720 752,703 772,674 783,670 791,683 804,710 815,730 828,744 848,744 861,747 873,733 891,713 900,667 910,632 921,616 931,621 954,639 965,665 974,693 987,698 995,704 1006,731 1017,734 1028,734 1047,741 1060,741 1075,738 1082,732 1091,710 1101,670 1112,632 1123,613 1135,624 1155,677 1167,695 1188,737 1197,740 1219,757 1229,761 1245,750 1255,732 1262,722', '#0404e0', 3);
s += [['2,602.5 1262,602.5','#40c840'],['5,617.500 1262,617.500','#3080a0'],['2,675.500 1262,675.500','#40c840'],['5,739.500 1262,739.500','#208828'],['5,757.500 1262,757.500','#186020']].map(([p, c]) => poly(p, c)).join('');
s += ['6,602 17,675','49,675 58,602','104,735 108,675 113,617 133,617 143,720 147,720 155,617 166,749','282,602 294,675 304,675 314,602','338,720 347,617 358,617 368,749','686,730 698,617 709,749','870,720 878,617 890,749','1051,716 1059,617','1080,617 1091,749'].map(p => poly(p, '#28b828')).join('');
s += ['134,749 144,675 166,675 176,749','655,749 666,675 709,675','826,749 836,675 872,675','1039,749 1049,675 1080,675 1088,749','1240,749 1251,675 1261,749'].map(p => poly(p, '#b81818')).join('');
s += seg(5, 749, 1266, 749, '#b070b0', 3);
s += ['677,749 686,632 709,632 719,749','836,749 846,632 858,749'].map(p => poly(p, '#e020e0', 4)).join('') + poly('1050,749 1059,632 1080,632 1091,749', '#c048a8', 3) + seg(1051, 745, 1055, 690, '#aaa', 2);
s += poly('878,749 889,675 900,749', '#fff');
s += seg(125, 749, 165, 749, '#e020e0', 3) + seg(338, 749, 367, 749, '#e020e0', 3) + seg(864, 749, 888, 749, '#e020e0', 3);
s += [98,108,120,141,332,343,683,864,1045,1056,1066].map(x => box(x, 719, 7, 30, '#ff0000')).join('');
s += ['104,750 128,750 119,755 112,755','687,750 709,750 702,755 694,755','1221,750 1244,750 1237,756 1229,756'].map(p => `<polygon points="${p}" fill="#a8c020"/>`).join('');
s += ['128,750 153,750 145,760 135,760','713,750 728,750 719,760','1244,750 1261,750 1251,760'].map(p => `<polygon points="${p}" fill="#c04890"/>`).join('');
$('sub2').innerHTML = `<g transform="translate(0,-582)">${s}</g>`;
$('axis2').innerHTML = `<g transform="translate(-2,-567)">${[[602,'100.0'],[632,'80.00'],[661,'60.00'],[690,'40.00'],[719,'20.00']].map(([y, t]) => seg(0, y + .5, 6, y + .5, '#8c1418') + ax(y, t)).join('')}</g>`;

/* date scale */
s = txt(5, 8, '2015年', '#b04038');
for (let i = 0; i < 119; i++) s += seg(cx(i) + .5, 0, cx(i) + .5, 3, '#6c1216');
s += [[58,7],[122,9],[176,10],[218,11],[260,12],[313,1],[356,2],[388,3],[430,4],[484,5],[526,6],[569,7],[623,8],[665,9],[717,10],[749,11],[793,12],[845,1],[888,2],[931,3],[983,4],[1027,5],[1069,6],[1123,8],[1197,10],[1228,11]].map(([x, t]) => seg(x + .5, 0, x + .5, 16, '#8c1418') + txt(x + 2, 8, t, '#b04038')).join('');
$('dates').innerHTML = s;

$('indtabs').innerHTML = '指标,模板,全部,主力清洗,吸筹,组C_O2,黄金买卖线,CCI2,成功率,买卖差,买,买卖,改进周CD,改进周DJ,KDJ周,MACD周,必买2,下单买入,买卖KD,买入三五天1,浪,大底,仓区,中长期,买盘,月死叉,机会来临2,获利,6金叉,吸,顶底,&gt;'.split(',')
  .map(t => `<button>${t.replace(/^[A-Z0-9_]+|[A-Z0-9_]+$/g, m => `<span class="lt">${m}</span>`)}</button>`).join('');

/* quote tables */
const tb = (rows, cls, cg) => `<table class="${cls}"><colgroup>${cg.map(w => `<col style="width:${w}px">`).join('')}</colgroup><tbody>${rows}</tbody></table>`;
const cell = v => { const [t, c = ''] = v.split('/'); return `<td class="${c}">${t}</td>`; };
const four = l => l.map(r => { const [a, b, c, d] = r.split(' '); return `<tr><th>${a}</th>${cell(b)}<th>${c}</th>${cell(d)}</tr>`; }).join('');
const five = l => l.map(r => { const [a, b, c] = r.split(' '); return `<tr><th>${a}</th><td>${b}</td><td>${c}</td></tr>`; }).join('');
const C4 = [50, 58, 48, 67];
$('quote').innerHTML = tb(four(['委比 -13.86%/g 委差 -809/g']), '', C4)
 + tb(five(['卖五 6.61 560','卖四 6.60 1049','卖三 6.59 522','卖二 6.58 1032','卖一 6.57 161']), 'q5 pad', [50, 58, 115])
 + tb(five(['买一 6.56 1211','买二 6.55 705','买三 6.54 204','买四 6.53 296','买五 6.52 99']), 'q5 pad', [50, 58, 115])
 + tb(four(['现价 6.57/r 今开 6.49/r','涨跌 0.17/r 最高 6.78/r','涨幅 2.66%/r 最低 6.44/r','总量 307988/y 量比 5.24/m','外盘 174627/r 内盘 133361/g']), 'pad', C4)
 + tb(four(['换手 4.42% 股本 7.17亿','净资 4.15 流通 6.97亿','收益㈢ 0.184 PE(动) 26.8']), 'pad', C4)
 + tb([['净流入额','2761万','13%'],['大宗流入','803.9万','4%']].map(([a, b, c]) => `<tr><th>${a}</th><td class="r">${b}</td><td class="r">${c}</td></tr>`).join(''), 'pad', [80, 106, 37])
 + tb(['601/m B 4','20 B 1','157 B 7','102 B 13','28 S 4','121 S 5','145 S 7','50 S 2','183 S 12','5 B 1','23 B 2','10 B 1','68 B 6','15 - 2','2582/m - 158'].map((r, k) => { const [v, d, n] = r.split(' '); return `<tr><th>${k < 13 ? '14:56' : k < 14 ? '14:57' : '15:00'}</th><td class="r">${k === 13 ? '6.56' : '6.57'}</td>${cell(v.includes('/') ? v : v + '/y')}<td class="${d === 'B' ? 'r' : 'g'}">${d === '-' ? '' : d}</td><td>${n}</td></tr>`; }).join(''), 'ticks', [45, 60, 63, 25, 30]);

/* tool rail */
const R = (d, x = '') => `<svg width="17" height="17" fill="none" stroke="#4468a8">${x}<path d="${d}"/></svg>`;
const F = (t, c = '#244a86') => `<svg width="17" height="17"><rect x="1" y="1.500" width="15" height="14" fill="#fff" stroke="#4478b8"/><text x="8.500" y="12" text-anchor="middle" style="font-size:9px" fill="${c}">${t}</text></svg>`;
const fr = '<rect x="1.500" y="1.500" width="14" height="13" fill="#fff"/>';
const rail = [R('M2 8.500l5-5v3h8v4H7v3z'), R('M8.500 1l6 7h-3v8h-6V8h-3z'), R('M8.500 16l6-7h-3V1h-6v8h-3z'),
 R('M3 4h5M3 7h5M3 10h5', fr + '<path d="M9 4h5M9 7h5" stroke="#d02020"/><path d="M3 12h6" stroke="#209020"/><path d="M8 12l5-5M13 10l-4 4" stroke="#888"/>'), R('M11 4h4M11 7h4M11 10h4M11 12.500h4', fr + '<path d="M3 4h3M3 7h3M3 10h3M3 12.500h3" stroke="#d02020"/><path d="M7 4h3M7 7h3M7 10h3M7 12.500h3" stroke="#208020"/>'), R('', fr + '<path d="M3 11l4-3 3 1 5-5" stroke="#c82020"/>'), R('', fr + '<path d="M4.500 5v6M13 3v6" stroke="#d02020" stroke-width="3"/><path d="M8.500 5v8" stroke="#208020" stroke-width="3"/>'),
 R('M4.500 4V1.500h12V11H14M1.500 4.500H13v10H1.500zM3 7.500h4M8 7.500h4M3 10h4M8 10h4'), F('F10'), R('', fr + '<path d="M4 3h4v3H4zM9 6h4v3H9zM9 11h4v3H9zM6 6v6h3" stroke="#c8a020"/>'), F('自', '#d86820'), F('F12'), F('f(x)'), R('M8.500 5a3 3 0 1 0 .01 0', fr), 'hr',
 R('', fr + '<path d="M3 6l2-2 2 2 2-2 2 2 3-2M3 11l2-2 2 2 2-2 2 2 3-2" stroke="#b02050"/>'), '<b style="font-size:10px;color:#3038c0">RSI</b>', '<b style="font-size:16px;color:#c03030">S</b>', '<svg width="17" height="17"><path d="M8.500 0l4 4h-8zM8.500 17l4-4h-8zM0 8.500l4-4v8zM17 8.500l-4-4v8zM6 6h5v5H6z" fill="#2858b0"/></svg>', '<svg width="17" height="17"><path d="M2 15l2-5 8-8 3 3-8 8z" fill="#e89830" stroke="#a06020"/><path d="M11 3l3 3 2-2-3-3z" fill="#e05848"/></svg>', 'hr',
 F('F5'), R('', fr + '<circle cx="6.500" cy="6.500" r="3" fill="#70c060" stroke="#309030"/><circle cx="10.500" cy="10" r="3" fill="#70c060" stroke="#309030"/>'), '1', '5', '15', '30', '60', '日', '周', '月', 'N', '多', '季', '年'];
$('rail').innerHTML = rail.map(t => t === 'hr' ? '<hr>' : `<button class="${t === '周' ? 'on' : ''}">${t}</button>`).join('');

/* market indices */
$('idx').innerHTML = ['上证 3351.92 -78.54 -2.29% 2705亿','深证 11175.5 -385.33 -3.33% 2840亿','中小 7748.83 -285.25 -3.55% 1226亿','沪深 4102.40 -125.17 -2.96% 2375亿','创业 1794.78 -58.60 -3.16% 701.2亿']
 .map(r => { const [n, a, b, c, v] = r.split(' '); return `<div class="idx"><span>${n}</span><b>${a}</b><b>${b}</b><b>${c}</b><span>${v}</span></div>`; }).join('');
s = box(8,3,13,6,'#d82020') + box(21,3,10,6,'#108010') + box(67,3,6,6,'#d82020') + box(73,3,10,6,'#108010');
[11,15].forEach(y => { for (let k = 0; k < 6; k++) s += box(k * 8, y, 6, 3, '#c82828') + box(52 + k * 8, y, 6, 3, '#107818'); });
$('meter').innerHTML = s;
</script>
</body>
</html>
